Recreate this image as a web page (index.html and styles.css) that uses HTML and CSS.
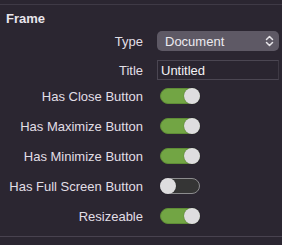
FILE: index.html
```html
<!DOCTYPE html>
<html lang="en">
  <head>
    <meta charset="UTF-8" />
    <title>Frame Inspector</title>
    <link rel="stylesheet" href="styles.css">
  </head>
  <body>
    <div class="panel">
      <h2 class="section-title">Frame</h2>

      <div class="row type">
        <div class="label">Type</div>
        <div class="popup">
          <span>Document</span>
          <svg class="chevrons" width="9" height="12" viewBox="0 0 9 12">
            <path d="M1.5 4.5 L4.5 1.5 L7.5 4.5 M1.5 7.5 L4.5 10.5 L7.5 7.5" fill="none" stroke="#e8e6ea" stroke-width="1.5" stroke-linecap="round" stroke-linejoin="round" />
          </svg>
        </div>
      </div>

      <div class="row title">
        <div class="label">Title</div>
        <div class="field">Untitled</div>
      </div>

      <div class="row switch first">
        <div class="label">Has Close Button</div>
        <div class="toggle on"><div class="knob"></div></div>
      </div>

      <div class="row switch">
        <div class="label">Has Maximize Button</div>
        <div class="toggle on"><div class="knob"></div></div>
      </div>

      <div class="row switch">
        <div class="label">Has Minimize Button</div>
        <div class="toggle on"><div class="knob"></div></div>
      </div>

      <div class="row switch">
        <div class="label">Has Full Screen Button</div>
        <div class="toggle"><div class="knob"></div></div>
      </div>

      <div class="row switch">
        <div class="label">Resizeable</div>
        <div class="toggle on"><div class="knob"></div></div>
      </div>
    </div>
  </body>
</html>
```

FILE: styles.css
```css
body {
  margin: 0;
  background-color: #2b2631;
  font-family: "Liberation Sans", Arial, sans-serif;
  color: #e2dfe6;
}
.panel {
  margin-top: 4px;
  border-top: 1px solid #3f3a46;
  border-bottom: 1px solid #48424f;
  padding: 6px 3px 5px 6px;
}
.section-title {
  margin: 0 0 4px;
  font-size: 13px;
  font-weight: bold;
  line-height: 16px;
  color: #e8e5eb;
}
.row {
  display: flex;
  align-items: center;
  gap: 14px;
}
.row.type,
.row.title {
  height: 20px;
}
.row.title {
  margin-top: 9px;
}
.row.switch {
  height: 30px;
}
.row.switch.first {
  margin-top: 1px;
}
.label {
  width: 137px;
  flex: none;
  text-align: right;
  font-size: 13px;
  white-space: nowrap;
}
.popup {
  flex: 1;
  height: 20px;
  border-radius: 5px;
  background: #5e5965;
  display: flex;
  align-items: center;
  justify-content: space-between;
  padding: 0 5px 0 8px;
  font-size: 13px;
  color: #ece9ef;
}
.chevrons {
  display: block;
}
.field {
  flex: 1;
  height: 18px;
  border: 1px solid #4b4652;
  border-right-color: #3e3944;
  background: #2a2530;
  padding-left: 3px;
  font-size: 13px;
  line-height: 19px;
  color: #f4f2f6;
}
.toggle {
  position: relative;
  margin-left: 3px;
  width: 40px;
  height: 16px;
  border-radius: 8px;
  background: #353535;
  box-sizing: border-box;
  border: 1px solid #8c8c8e;
}
.toggle.on {
  background: #72a544;
  border-color: #5f8d36;
}
.knob {
  position: absolute;
  top: -1px;
  left: -1px;
  width: 16px;
  height: 16px;
  border-radius: 50%;
  background: #dedddf;
  box-shadow: 0 0 1px rgba(0, 0, 0, 0.5);
}
.toggle.on .knob {
  left: auto;
  right: -1px;
}
```
